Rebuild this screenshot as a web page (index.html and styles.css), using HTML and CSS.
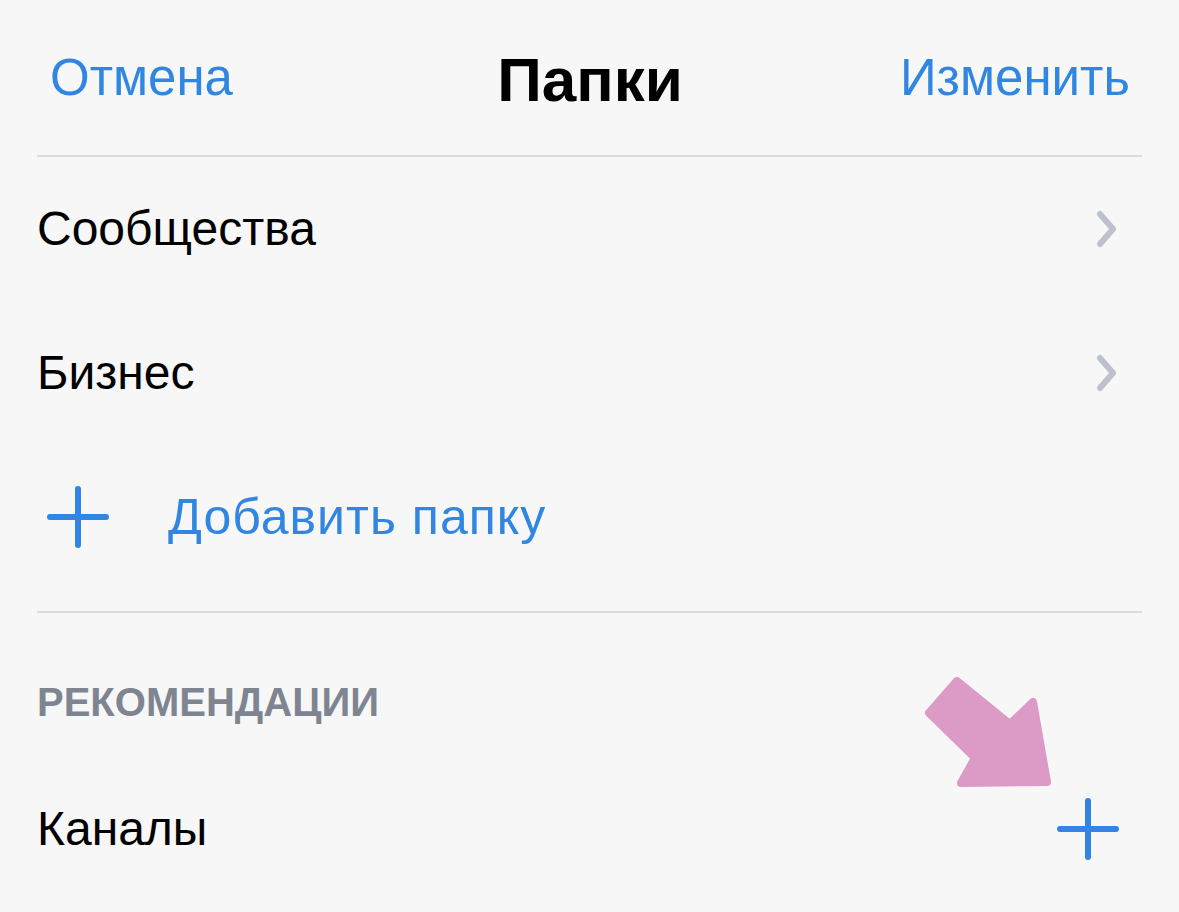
FILE: index.html
```html
<!DOCTYPE html>
<html lang="ru">
<head>
<meta charset="utf-8">
<title>Папки</title>
<link rel="stylesheet" href="styles.css">
</head>
<body>
<div class="screen">
  <header class="nav">
    <span class="nav-btn nav-left">Отмена</span>
    <span class="nav-title">Папки</span>
    <span class="nav-btn nav-right">Изменить</span>
  </header>
  <section class="list">
    <div class="row">
      <span class="row-label">Сообщества</span>
      <svg class="chevron" viewBox="0 0 22 38" width="22" height="38"><path d="M4 4 L17 19 L4 34" fill="none" stroke="#bcc2cc" stroke-width="6" stroke-linecap="round" stroke-linejoin="round"/></svg>
    </div>
    <div class="row">
      <span class="row-label">Бизнес</span>
      <svg class="chevron" viewBox="0 0 22 38" width="22" height="38"><path d="M4 4 L17 19 L4 34" fill="none" stroke="#bcc2cc" stroke-width="6" stroke-linecap="round" stroke-linejoin="round"/></svg>
    </div>
    <div class="row row-add">
      <svg class="plus" viewBox="0 0 62 62" width="62" height="62"><path d="M31 3 V59 M3 31 H59" fill="none" stroke="#3186e1" stroke-width="6" stroke-linecap="round"/></svg>
      <span class="add-label">Добавить папку</span>
    </div>
  </section>
  <section class="recs">
    <div class="section-title">РЕКОМЕНДАЦИИ</div>
    <div class="row">
      <span class="row-label">Каналы</span>
      <svg class="plus plus-right" viewBox="0 0 62 62" width="62" height="62"><path d="M31 3 V59 M3 31 H59" fill="none" stroke="#3186e1" stroke-width="6" stroke-linecap="round"/></svg>
    </div>
  </section>
  <svg class="arrow" viewBox="0 0 1179 912" width="1179" height="912">
    <polygon points="957,681 1010,724 1033,702 1047,782 961,783 975,758 929,713" fill="#dc9bc6" stroke="#dc9bc6" stroke-width="8" stroke-linejoin="round"/>
  </svg>
</div>
</body>
</html>
```
FILE: styles.css
```css
* { box-sizing: border-box; }
html, body {
  margin: 0;
  padding: 0;
  background: #f7f7f7;
}
body {
  font-family: "Liberation Sans", Arial, sans-serif;
  color: #000;
}
.screen {
  position: relative;
  width: 1179px;
  height: 912px;
  padding: 0 37px;
  overflow: hidden;
}
.nav {
  height: 157px;
  display: grid;
  grid-template-columns: 1fr auto 1fr;
  align-items: center;
  padding: 0 12px 0 13px;
  border-bottom: 2px solid #dcdcdc;
}
.nav-btn {
  font-size: 51px;
  color: #3186e1;
  line-height: 1;
}
.nav-left { justify-self: start; }
.nav-right { justify-self: end; }
.nav-title {
  font-size: 62px;
  font-weight: 700;
  line-height: 1;
  padding-top: 4px;
}
.list {
  border-bottom: 2px solid #dcdcdc;
  padding-bottom: 22px;
}
.row {
  height: 144px;
  display: flex;
  align-items: center;
  justify-content: space-between;
}
.row-label {
  font-size: 48px;
  line-height: 1;
}
.chevron {
  margin-right: 24px;
}
.row-add {
  justify-content: flex-start;
}
.plus {
  margin-left: 10px;
  flex: none;
}
.plus-right {
  margin-left: 0;
  margin-right: 23px;
}
.add-label {
  margin-left: 59px;
  font-size: 50px;
  line-height: 1;
  letter-spacing: 1px;
  color: #3186e1;
}
.section-title {
  padding-top: 65px;
  padding-bottom: 31px;
  font-size: 40px;
  line-height: 48px;
  font-weight: 700;
  color: #7e8591;
}
.arrow {
  position: absolute;
  left: 0;
  top: 0;
  pointer-events: none;
}
```
